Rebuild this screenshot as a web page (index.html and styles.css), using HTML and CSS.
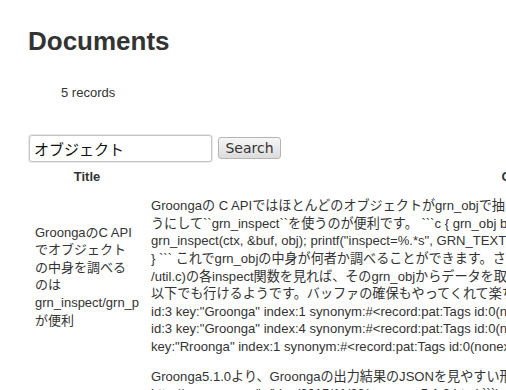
FILE: index.html
```html
<!DOCTYPE html>
<html lang="ja">
<head>
  <meta charset="UTF-8" />
  <title>Documents</title>
  <link rel="stylesheet" href="styles.css">
</head>
<body>
  <div class="page">
    <h1>Documents</h1>
    <div class="count">5 records</div>

    <form class="search" onsubmit="return false">
      <input type="text" class="search-input" value="オブジェクト" />
      <button type="submit" class="search-button">Search</button>
    </form>

    <table class="records">
      <colgroup>
        <col class="col-title">
        <col class="col-content">
      </colgroup>
      <thead>
        <tr>
          <th>Title</th>
          <th>Content</th>
        </tr>
      </thead>
      <tbody>
        <tr>
          <td class="title">GroongaのC API<br>でオブジェクト<br>の中身を調べる<br>のは<br>grn_inspect/grn_p<br>が便利</td>
          <td class="content">
            <p>Groongaの C APIではほとんどのオブジェクトがgrn_objで抽象化されているため、中身を確認したいときは以下のよ<br>うにして``grn_inspect``を使うのが便利です。 ```c { grn_obj buf; GRN_TEXT_INIT(&amp;buf, 0);<br>grn_inspect(ctx, &amp;buf, obj); printf("inspect=%.*s", GRN_TEXT_LEN(&amp;buf), GRN_TEXT_VALUE(&amp;buf)); GRN_OBJ_FIN(ctx, &amp;buf);<br>} ``` これでgrn_objの中身が何者か調べることができます。さらに、[lib/util.c](https://github.com/groonga/groonga/blob/master/lib<br>/util.c)の各inspect関数を見れば、そのgrn_objからデータを取り出す方法もわかります。 また、デバッグ時にはgdbで<br>以下でも行けるようです。バッファの確保もやってくれて楽ちんです。 ``` (gdb) call grn_p(ctx, obj) #&lt;record:hash:Tags<br>id:3 key:"Groonga" index:1 synonym:#&lt;record:pat:Tags id:0(nonexistent)&gt;<br>id:3 key:"Groonga" index:4 synonym:#&lt;record:pat:Tags id:0(nonexistent)&gt;<br>key:"Rroonga" index:1 synonym:#&lt;record:pat:Tags id:0(nonexistent)&gt; ```</p>
          </td>
        </tr>
        <tr>
          <td class="title">Groonga5.1.0でJSONの整形出力に対応</td>
          <td class="content">
            <p>Groonga5.1.0より、Groongaの出力結果のJSONを見やすい形式で出力する機能が追加されました。<br>http://groonga.org/ja/blog/2015/11/29/groonga-5.1.0.html ```bash % groonga --output-pretty yes<br>% echo 'status' | groonga -n /tmp/db --output-pretty yes ``` のようにすると、出力結果が<br>以下のように整形されます。 ```json [ [ 0, 1448780000.0, 0.0001 ], { "alloc_count": 148,<br>"starttime": 1448780000, "uptime": 0, "version": "5.1.0", "n_queries": 0 } ] ```<br>コマンドラインで確認したい時に便利です。</p>
          </td>
        </tr>
      </tbody>
    </table>
  </div>
</body>
</html>
```

FILE: styles.css
```css
body {
  margin: 0;
  font-family: "Liberation Sans", "Noto Sans CJK JP", sans-serif;
  font-size: 13px;
  line-height: 17.6px;
  color: #333;
  background: #fff;
}

.page {
  padding: 23px 0 0 28px;
}

h1 {
  margin: 0;
  font-size: 26px;
  line-height: 36px;
  font-weight: bold;
}

.count {
  margin-top: 25px;
  padding-left: 33px;
}

.search {
  margin: 33px 0 0 1px;
  display: flex;
  align-items: center;
}

.search-input {
  width: 183px;
  height: 27px;
  box-sizing: border-box;
  margin: 0;
  padding: 2px 4px;
  border: 1px solid #c4c4c4;
  border-radius: 3px;
  box-shadow: 0 0 0 1px #e9e9e9;
  font-family: "DejaVu Sans", "Noto Sans CJK JP", sans-serif;
  font-size: 15px;
  color: #111;
}

.search-button {
  margin-left: 6px;
  width: 63px;
  height: 22px;
  padding: 0;
  border: 1px solid #b5b5b5;
  border-radius: 3px;
  background: linear-gradient(#f6f6f6, #dcdcdc);
  font-family: "DejaVu Sans", sans-serif;
  font-size: 14px;
  color: #333;
}

.records {
  table-layout: fixed;
  border-collapse: collapse;
  width: 878px;
  margin-left: 1px;
}

.records .col-title {
  width: 116px;
}

.records .col-content {
  width: 762px;
}

.records th,
.records td {
  padding: 6px 6px;
  text-align: left;
}

.records th {
  text-align: center;
  font-weight: bold;
}

.records .title {
  vertical-align: middle;
}

.records .content {
  vertical-align: top;
  font-size: 13.1px;
}

.records p {
  margin: 0;
  white-space: nowrap;
}
```
